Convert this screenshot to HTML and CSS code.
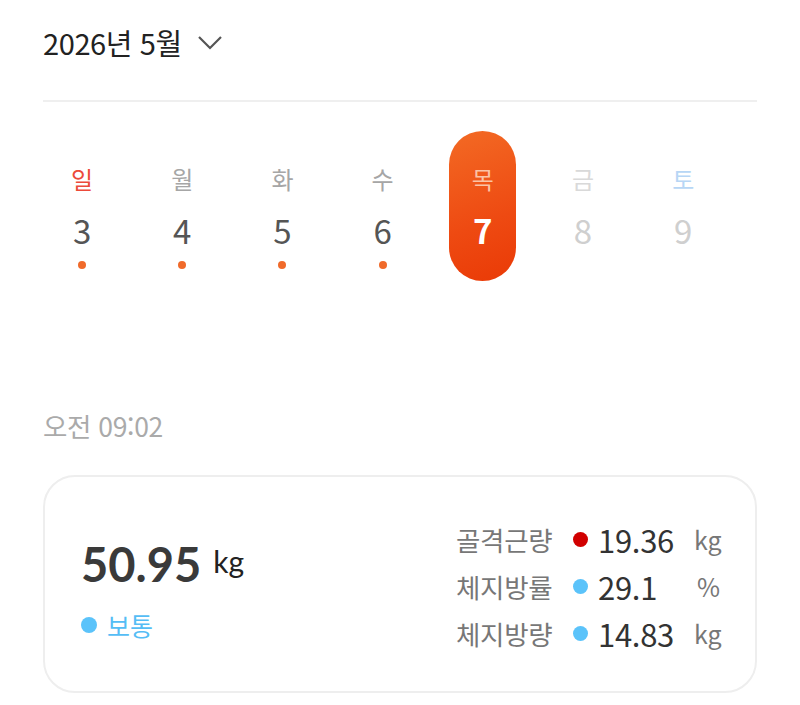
FILE: index.html
```html
<!DOCTYPE html>
<html lang="ko">
<head>
<meta charset="utf-8">
<link rel="stylesheet" href="styles.css">
</head>
<body>
<div class="page">
  <header class="month">
    <span class="month-title">2026년 5월</span>
    <svg class="chev" width="26" height="16" viewBox="0 0 26 16"><path d="M2 2 L13 13 L24 2" fill="none" stroke="#555" stroke-width="2.2"/></svg>
  </header>
  <div class="divider"></div>
  <div class="week">
    <div class="day"><span class="wd sun">일</span><span class="dn">3</span><span class="dot"></span></div>
    <div class="day"><span class="wd">월</span><span class="dn">4</span><span class="dot"></span></div>
    <div class="day"><span class="wd">화</span><span class="dn">5</span><span class="dot"></span></div>
    <div class="day"><span class="wd">수</span><span class="dn">6</span><span class="dot"></span></div>
    <div class="day sel"><span class="wd">목</span><span class="dn">7</span><span class="dot none"></span></div>
    <div class="day future"><span class="wd">금</span><span class="dn">8</span><span class="dot none"></span></div>
    <div class="day future"><span class="wd sat">토</span><span class="dn">9</span><span class="dot none"></span></div>
  </div>
  <div class="time">오전 09:02</div>
  <div class="card">
    <div class="main">
      <div class="weight"><span class="wnum">50.95</span><span class="wunit">kg</span></div>
      <div class="status"><span class="sdot"></span>보통</div>
    </div>
    <div class="metrics">
      <div class="row"><span class="label">골격근량</span><span class="mdot red"></span><span class="val">19.36</span><span class="unit">kg</span></div>
      <div class="row"><span class="label">체지방률</span><span class="mdot blue"></span><span class="val">29.1</span><span class="unit">%</span></div>
      <div class="row"><span class="label">체지방량</span><span class="mdot blue"></span><span class="val">14.83</span><span class="unit">kg</span></div>
    </div>
  </div>
</div>
</body>
</html>
```

FILE: styles.css
```css
* { box-sizing: border-box; }
html, body { margin: 0; padding: 0; background: #fff; }
body { font-family: "Noto Sans CJK KR", "Noto Sans", sans-serif; color: #333; }
.page { width: 800px; height: 705px; overflow: hidden; padding: 0 43px; }
.month { height: 100px; display: flex; align-items: center; gap: 15px; padding-bottom: 16px; }
.month-title { font-size: 29px; color: #222; letter-spacing: -0.4px; }
.chev { margin-top: 2px; }
.divider { height: 2px; background: #efefef; }
.week { display: grid; grid-template-columns: repeat(7, 100.2px); margin: 29px 0 0 -11px; height: 150px; }
.day { display: flex; flex-direction: column; align-items: center; justify-self: center; width: 67px; height: 150px; border-radius: 34px; padding-top: 31px; }
.wd { font-size: 24px; line-height: 34px; color: #a6a6a6; }
.wd.sun { color: #ec4a3a; }
.wd.sat { color: #a9cdf2; }
.dn { font-size: 33px; line-height: 42px; margin-top: 13px; color: #555; }
.dot { width: 8px; height: 8px; border-radius: 50%; background: #f06a2a; margin-top: 10px; }
.dot.none { visibility: hidden; }
.future .wd { color: #d9d9d9; }
.future .wd.sat { color: #b7d6f5; }
.future .dn { color: #cfcfcf; }
.sel { background: linear-gradient(160deg, #f36a24 0%, #ee4a12 60%, #ea3a06 100%); }
.sel .wd { color: #fbc3a6; }
.sel .dn { color: #fff; font-weight: 700; }
.time { margin-top: 127px; font-size: 26.5px; color: #aaa; line-height: 36px; letter-spacing: -0.3px; }
.card { margin-top: 31px; height: 218px; border: 2px solid #eeeeee; border-radius: 32px; display: flex; justify-content: space-between; align-items: center; padding: 0 35px 0 36px; }
.main { display: flex; flex-direction: column; gap: 16px; margin-top: 10px; }
.weight { display: flex; align-items: baseline; gap: 12px; }
.wnum { font-family: Lato, sans-serif; font-weight: 700; font-size: 47px; color: #3a3a3a; line-height: 56px; }
.wunit { font-family: Lato, sans-serif; font-size: 30px; color: #222; position: relative; top: -9px; }
.status { display: flex; align-items: center; gap: 10px; font-size: 25px; color: #55bdf5; line-height: 34px; }
.sdot { width: 16px; height: 16px; border-radius: 50%; background: #5bc3fa; }
.metrics { display: flex; flex-direction: column; gap: 12px; margin-top: 4px; }
.row { display: flex; align-items: center; height: 35px; }
.label { font-size: 26.5px; color: #777; letter-spacing: -0.3px; width: 117px; }
.mdot { width: 15px; height: 15px; border-radius: 50%; margin-right: 10px; }
.mdot.red { background: #d10000; }
.mdot.blue { background: #5bc3fa; }
.val { font-size: 31px; color: #333; width: 96px; letter-spacing: -0.3px; }
.unit { font-size: 25px; color: #777; width: 26px; text-align: right; }
```
